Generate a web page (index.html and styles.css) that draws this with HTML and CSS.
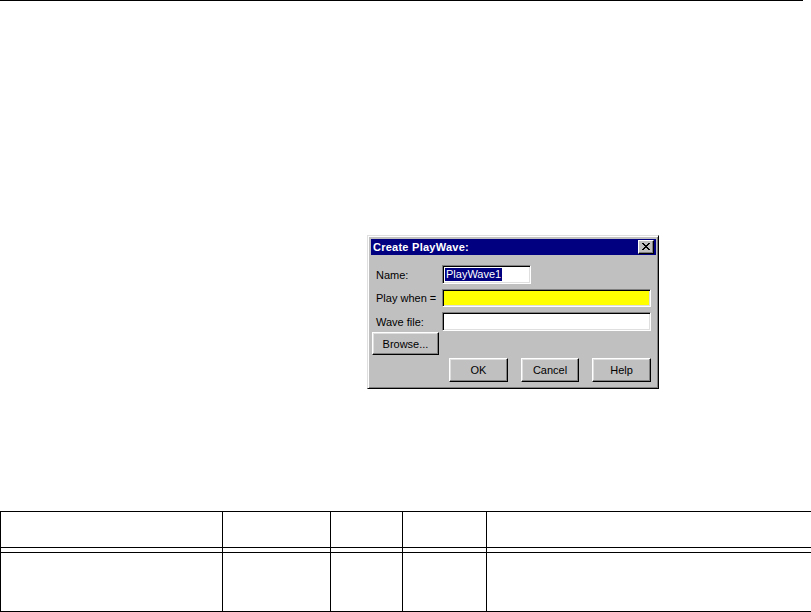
FILE: index.html
```html
<!DOCTYPE html>
<html lang="en">
<head>
    <meta charset="UTF-8">
    <meta name="viewport" content="width=device-width, initial-scale=1.0">
    <title>Create PlayWave</title>
    <link rel="stylesheet" href="styles.css">
</head>
<body>
    <div class="top-rule"></div>

    <!-- Dialog figure -->
    <div class="figure">
        <div class="dialog">
            <div class="titlebar">
                <span class="title">Create PlayWave:</span>
                <div class="close-btn">
                    <svg width="8" height="7" viewBox="0 0 8 7" shape-rendering="crispEdges">
                        <path d="M0 0h2v1h-2zM6 0h2v1h-2zM1 1h2v1h-2zM5 1h2v1h-2zM2 2h4v1h-4zM3 3h2v1h-2zM2 4h4v1h-4zM1 5h2v1h-2zM5 5h2v1h-2zM0 6h2v1h-2zM6 6h2v1h-2z" fill="#000"/>
                    </svg>
                </div>
            </div>
            <div class="dialog-body">
                <div class="field-row row-name">
                    <span class="label">Name:</span>
                    <div class="edit name-edit"><span class="sel">PlayWave1</span></div>
                </div>
                <div class="field-row row-play">
                    <span class="label">Play when =</span>
                    <div class="edit play-edit"></div>
                </div>
                <div class="field-row row-wave">
                    <span class="label">Wave file:</span>
                    <div class="edit"></div>
                </div>
                <div class="btn browse-btn">Browse...</div>
                <div class="btn-row">
                    <div class="btn ok-btn">OK</div>
                    <div class="btn cancel-btn">Cancel</div>
                    <div class="btn help-btn">Help</div>
                </div>
            </div>
        </div>
    </div>

    <table class="grid">
        <colgroup>
            <col style="width: 222px">
            <col style="width: 108px">
            <col style="width: 72px">
            <col style="width: 84px">
            <col style="width: 325px">
        </colgroup>
        <tr class="head"><td></td><td></td><td></td><td></td><td></td></tr>
        <tr class="gap"><td></td><td></td><td></td><td></td><td></td></tr>
        <tr class="data"><td></td><td></td><td></td><td></td><td></td></tr>
    </table>
</body>
</html>
```

FILE: styles.css
```css
body {
    margin: 0;
    padding: 0;
    background: #ffffff;
    font-family: "Liberation Sans", Arial, sans-serif;
    font-size: 11px;
    color: #000;
}

.top-rule {
    width: 803px;
    height: 1px;
    background: #000;
}

.figure {
    padding-left: 367px;
    margin-top: 234px;
}

/* Win95 style dialog */
.dialog {
    box-sizing: border-box;
    width: 292px;
    height: 154px;
    padding: 3px 2px 0 3px;
    background: #c0c0c0;
    border: 1px solid;
    border-color: #dfdfdf #000 #000 #dfdfdf;
    box-shadow: inset 1px 1px #fff, inset -1px -1px #808080;
}

.titlebar {
    height: 16px;
    background: #000080;
    display: flex;
    align-items: center;
    justify-content: space-between;
    padding-left: 2px;
}

.title {
    color: #fff;
    font-weight: bold;
    font-size: 11px;
    letter-spacing: 0.25px;
}

.close-btn {
    box-sizing: border-box;
    width: 16px;
    height: 14px;
    margin-right: 2px;
    background: #c0c0c0;
    border: 1px solid;
    border-color: #fff #000 #000 #fff;
    box-shadow: inset -1px -1px #808080;
    display: flex;
    align-items: center;
    justify-content: center;
    padding: 0 1px 1px 0;
}

.dialog-body {
    padding: 10px 5px 0 0;
}

.field-row {
    display: flex;
    align-items: center;
    margin-bottom: 5px;
}

.label {
    width: 66px;
    padding-left: 5px;
}

.edit {
    box-sizing: border-box;
    flex: 1;
    height: 19px;
    background: #fff;
    border: 1px solid;
    border-color: #808080 #fff #fff #808080;
    box-shadow: inset 1px 1px #000, inset -1px -1px #dfdfdf;
    display: flex;
    align-items: center;
    padding-left: 2px;
}

.name-edit {
    flex: none;
    width: 89px;
}

.play-edit {
    height: 18px;
    background: #ffff00;
}

.row-wave {
    margin-bottom: 1px;
}

.sel {
    background: #000080;
    color: #fff;
    line-height: 13px;
    padding: 0 1px;
}

.btn {
    box-sizing: border-box;
    height: 24px;
    background: #c0c0c0;
    border: 1px solid;
    border-color: #fff #000 #000 #fff;
    box-shadow: inset -1px -1px #808080, inset 1px 1px #dfdfdf;
    display: flex;
    align-items: center;
    justify-content: center;
}

.browse-btn {
    width: 67px;
    height: 23px;
    margin-left: 1px;
}

.btn-row {
    display: flex;
    justify-content: flex-end;
    gap: 13px;
    margin-top: 3px;
}

.ok-btn, .help-btn {
    width: 59px;
}

.cancel-btn {
    width: 58px;
}

/* Empty ruled table */
.grid {
    border-collapse: collapse;
    table-layout: fixed;
    width: 811px;
    margin-top: 122px;
}

.grid td {
    border: 1px solid #000;
    padding: 0;
}

.grid .head td {
    height: 35px;
}

.grid .gap td {
    height: 4px;
}

.grid .data td {
    height: 58px;
}
```
